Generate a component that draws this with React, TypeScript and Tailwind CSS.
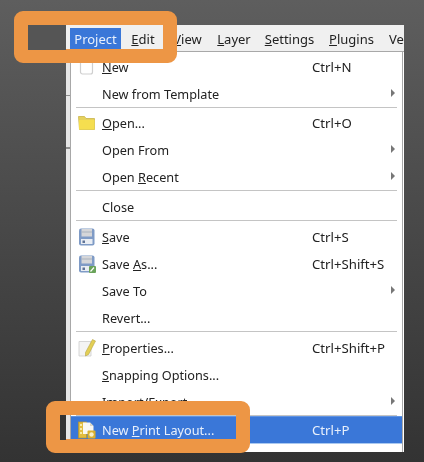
import { ReactNode } from "react";

function Blank() {
  return (
    <svg width="18" height="18" viewBox="0 0 18 18">
      <rect x="2.5" y="1" width="12" height="15" rx="2" fill="#fff" stroke="#cfcfcf" strokeWidth="1.2" />
    </svg>
  );
}

function Folder() {
  return (
    <svg width="18" height="18" viewBox="0 0 18 18">
      <path d="M0.5 2.5h6l1.5 2h8.5v11h-15z" fill="#e6d25c" stroke="#c9b44a" strokeWidth="0.8" />
      <path d="M1 6h15.5v9.5H1z" fill="#f5de4f" />
    </svg>
  );
}

function Floppy({ edit }: { edit?: boolean }) {
  return (
    <svg width="18" height="18" viewBox="0 0 18 18">
      <rect x="1" y="0.5" width="15.5" height="17" rx="2" fill="#7f9bc6" />
      <rect x="3.5" y="1" width="10.5" height="7.5" fill="#d5d6d9" />
      <rect x="3.5" y="3.5" width="10.5" height="1" fill="#a9b1bd" />
      <rect x="3" y="11" width="11.5" height="5" fill="#e9edf3" />
      <rect x="4.5" y="12.5" width="2.5" height="2.5" fill="#5f7396" />
      {edit && (
        <>
          <rect x="11" y="11" width="7" height="7" rx="1" fill="#6aa35a" />
          <path d="M12.5 16.5l3.5-4" stroke="#fff" strokeWidth="1.2" />
        </>
      )}
    </svg>
  );
}

function Pencil() {
  return (
    <svg width="18" height="18" viewBox="0 0 18 18">
      <path d="M1 2.5h12v14.5H1z" fill="#f4f4f4" stroke="#cdcdcd" strokeWidth="0.8" />
      <path d="M14.5 0.5l3 1.5-7 13.5-3 1.5 0-3.5z" fill="#e3cf55" stroke="#b7a544" strokeWidth="0.6" />
    </svg>
  );
}

function LayoutIcon() {
  return (
    <svg width="18" height="18" viewBox="0 0 18 18">
      <rect x="0.5" y="1" width="8" height="16" fill="#e2bd3f" stroke="#b8932f" strokeWidth="0.7" />
      <path d="M2 3h2v2H2zM2 7h2v2H2zM2 11h2v2H2z" fill="#f7eaa8" />
      <path d="M5 1.5h7l3.5 3.5v8H5z" fill="#f8f8f4" />
      <path d="M12 1.5v3.5h3.5z" fill="#d9d6c4" />
      <rect x="9.5" y="9.5" width="8" height="8" rx="1" fill="#d9b02f" />
      <circle cx="13.5" cy="13.5" r="2.2" fill="#f7efc8" />
    </svg>
  );
}

function Arrow() {
  return <span className="ml-auto mr-[7px] mb-[2px] h-0 w-0 border-y-[4px] border-l-[4px] border-y-transparent border-l-[#777777]" />;
}

function Row({ icon, label, shortcut, arrow, active }: { icon?: ReactNode; label: ReactNode; shortcut?: string; arrow?: boolean; active?: boolean }) {
  return (
    <div className={`flex h-[27px] items-center ${active ? "h-[28px] border-y border-b-[#a9c8f0] border-t-[#5f93e2] bg-[#3a77d8] text-[#e8f0fc]" : ""}`}>
      <span className="flex w-[31px] shrink-0 justify-center">{icon}</span>
      <span className="w-[210px] shrink-0 whitespace-nowrap pt-[2px] text-[12.7px]">{label}</span>
      {shortcut && <span className="whitespace-nowrap pt-[2px] text-[13.2px]">{shortcut}</span>}
      {arrow && <Arrow />}
    </div>
  );
}

function Sep({ h = "h-[3px]" }: { h?: string }) {
  return (
    <div className={`${h} pl-[5px] pr-[5px]`}>
      <div className="h-px w-full bg-[#c4c4c4]" />
    </div>
  );
}

const topMenus = [
  { label: "View", u: "V", rest: "iew", w: "w-[45px]" },
  { label: "Layer", u: "L", rest: "ayer", w: "w-[48px]" },
  { label: "Settings", u: "S", rest: "ettings", w: "w-[63px]" },
  { label: "Plugins", u: "P", rest: "lugins", w: "w-[61px]" },
];

export default function App() {
  return (
    <div
      className="relative h-[462px] w-[424px] overflow-hidden bg-gradient-to-b from-[#5e5e5e] to-[#333333] text-[13px] text-[#222222]"
      style={{ fontFamily: '"Noto Sans", "Open Sans", sans-serif' }}
    >
      <div className="pl-[66px] pt-[25px]">
        <div className="h-[427px] w-[338px] overflow-hidden bg-white blur-[0.4px]">
          <div className="flex h-[27px] items-center border-b border-[#a8a8a8] bg-[#f0f0f0] pl-[4px] pt-[1px]">
            <span className="flex h-[21px] w-[51px] items-center justify-center bg-[#3a77d8] pt-[3px] text-[#e8f0fc]">Project</span>
            <span className="w-[44px] pt-[3px] text-center">
              <u>E</u>dit
            </span>
            {topMenus.map((m) => (
              <span key={m.label} className={`${m.w} shrink-0 pt-[3px] text-center`}>
                <u>{m.u}</u>
                {m.rest}
              </span>
            ))}
            <span className="whitespace-nowrap pl-[7px] pt-[3px]">Ve</span>
          </div>
          <div className="flex h-[400px]">
            <div className="flex w-[4px] shrink-0 flex-col bg-[#e6e6e6]">
              <div className="mt-[43px] h-px bg-[#8c8c8c]" />
              <div className="mt-[51px] h-[2px] bg-[#8c8c8c]" />
            </div>
            <div className="w-[333px] border-l border-r border-[#a8a8a8]">
              <div className="h-px" />
              <Row icon={<Blank />} label={<><u>N</u>ew</>} shortcut="Ctrl+N" />
              <Row label="New from Template" arrow />
              <Sep h="h-[2px]" />
              <Row icon={<Folder />} label={<><u>O</u>pen...</>} shortcut="Ctrl+O" />
              <Row label="Open From" arrow />
              <Row label={<>Open <u>R</u>ecent</>} arrow />
              <Sep />
              <Row label="Close" />
              <Sep />
              <Row icon={<Floppy />} label={<><u>S</u>ave</>} shortcut="Ctrl+S" />
              <Row icon={<Floppy edit />} label={<>Save <u>A</u>s...</>} shortcut="Ctrl+Shift+S" />
              <Row label="Save To" arrow />
              <Row label="Revert..." />
              <Sep />
              <Row icon={<Pencil />} label={<><u>P</u>roperties...</>} shortcut="Ctrl+Shift+P" />
              <Row label={<><u>S</u>napping Options...</>} />
              <Row label="Import/Export" arrow />
              <Sep h="h-px" />
              <Row active icon={<LayoutIcon />} label={<>New <u>P</u>rint Layout...</>} shortcut="Ctrl+P" />
            </div>
          </div>
        </div>
      </div>
      {/* orange callouts sit over the screenshot */}
      <div className="absolute left-[14px] top-[11px] h-[52px] w-[163px] rounded-[9px] border-[14px] border-[#ed9645]" />
      <div className="absolute left-[28px] top-[25px] h-[25px] w-[38px] bg-[#555555]" />
      <div className="absolute left-[46px] top-[401px] h-[52px] w-[204px] rounded-[9px] border-[14px] border-[#ed9645]" />
      <div className="absolute left-[60px] top-[415px] h-[25px] w-[6px] bg-[#333333]" />
    </div>
  );
}
